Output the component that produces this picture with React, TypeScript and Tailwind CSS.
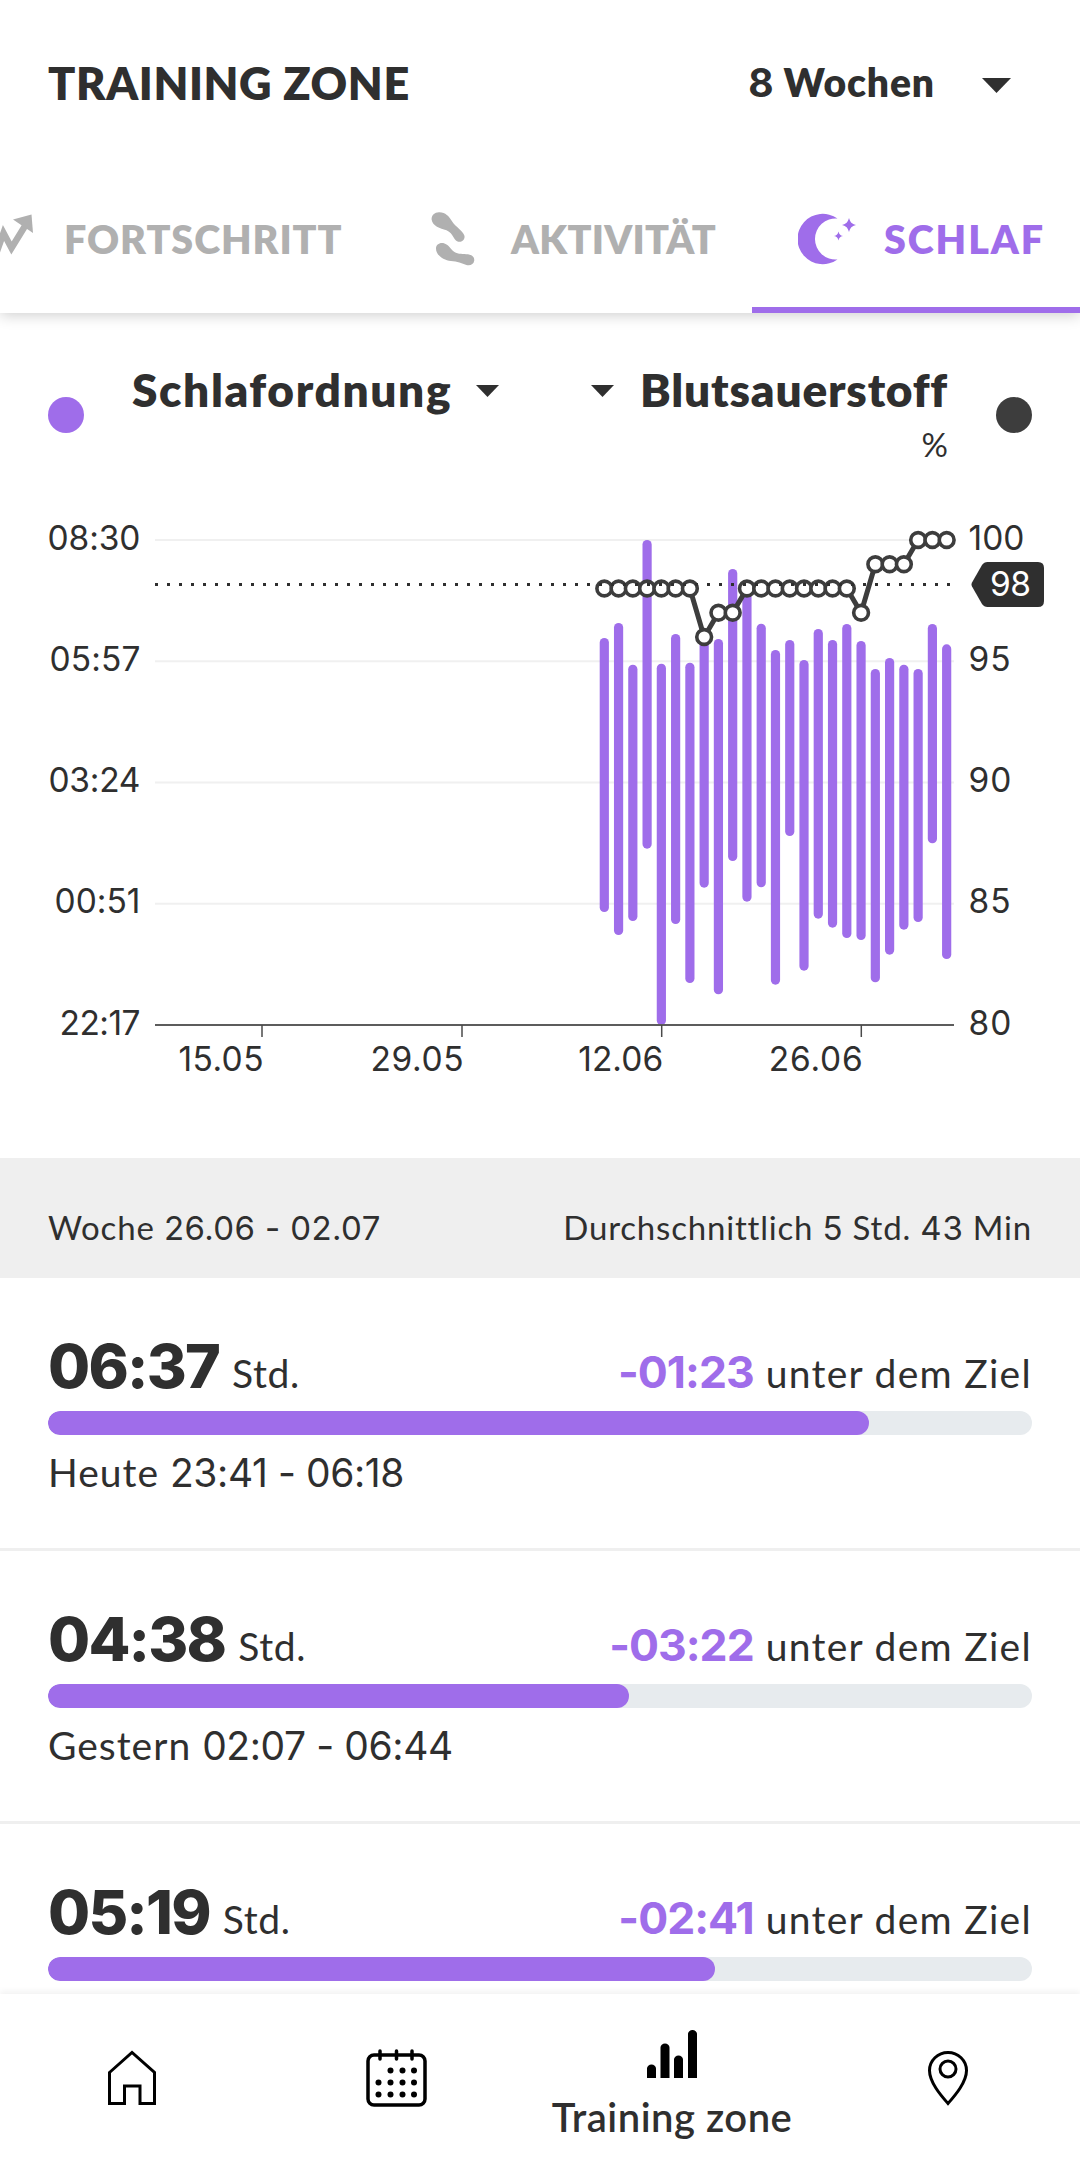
import React from 'react';

const PURPLE = '#9f6dea';
const DARK = '#2f2f2f';

const timeAxis = [
  { label: '08:30', width: 93 },
  { label: '05:57', width: 91 },
  { label: '03:24', width: 92 },
  { label: '00:51', width: 86 },
  { label: '22:17', width: 81 },
];

const oxygenAxis = [
  { label: '100', width: 56 },
  { label: '95', width: 42 },
  { label: '90', width: 43 },
  { label: '85', width: 42 },
  { label: '80', width: 43 },
];

const dates = [
  { label: '15.05', x: 262, width: 85 },
  { label: '29.05', x: 462, width: 93 },
  { label: '12.06', x: 661.7, width: 85 },
  { label: '26.06', x: 861.3, width: 94 },
];

// wake up / fall asleep position of every night, in chart units
const nights = [
  [172, 446], [157, 469], [198.7, 455], [74, 382.7], [197.7, 559],
  [168, 458], [196.7, 517], [170, 421.7], [173, 528.3], [103, 395],
  [122, 435.7], [157.7, 421.3], [184, 518.7], [174, 370], [194, 504.7],
  [163, 452.7], [174, 461.7], [158, 472], [175, 474], [203, 516.3],
  [192, 488.7], [198.7, 463.7], [203, 456], [158, 377.3], [178.3, 493],
];

const oxygen = [
  98, 98, 98, 98, 98, 98, 98, 96, 97, 97, 98, 98, 98,
  98, 98, 98, 98, 98, 97, 99, 99, 99, 100, 100, 100,
];

const entries = [
  { time: '06:37', diff: '-01:23', day: 'Heute', range: '23:41 - 06:18', percent: 83.4 },
  { time: '04:38', diff: '-03:22', day: 'Gestern', range: '02:07 - 06:44', percent: 59 },
  { time: '05:19', diff: '-02:41', percent: 67.8 },
];

const TOP = 74;
const STEP = 121.25;
const nightX = (i: number) => 604.3 + i * 14.265;
const oxygenY = (v: number) => TOP + ((100 - v) * STEP) / 5;

function Caret({ className }: { className: string }) {
  return (
    <svg className={className} viewBox="0 0 30 15" preserveAspectRatio="none" fill={DARK}>
      <path d="M0 0h30L15 15z" />
    </svg>
  );
}

function ProgressIcon() {
  return (
    <svg className="h-[60px] w-[60px] shrink-0" viewBox="0 0 60 60">
      <path d="M16 62 L29.500 24 L37.500 39 L51 17" fill="none" stroke="#b0b0b0" strokeWidth="6.500" strokeMiterlimit="8" />
      <path d="M39 10.500 L57.500 5.500 L59 24z" fill="#b0b0b0" />
    </svg>
  );
}

function StepsIcon() {
  return (
    <svg className="h-[54px] w-[44px] shrink-0" viewBox="0 0 44 54" fill="#b0b0b0">
      <path d="M.6 7.500C.4 3 4 0 8.500 .3c6 .3 9.500 4 12 8.200 2 3.500 5 5.800 8.500 9.200 3.500 3.300 6 6.500 3.800 9.800-2.200 3.200-6.500 3-8.800 0-2.300-3.400-3.500-7-8.500-9.200C9 16.500 1.500 14 .6 7.500z" />
      <path d="M5 36.500c0-4 4-6.500 8.500-5 4.500 1.400 6 5.800 10 8.500 3.500 2.500 9 1.700 13.500 2.300 4.500.7 6.700 3.200 6.200 6.500-.5 3.500-4 5.300-7.800 4.200-4.500-1.600-9-3.500-15.500-4C12.500 48 5 43.500 5 36.500z" />
    </svg>
  );
}

function MoonIcon() {
  return (
    <svg className="h-[52px] w-[58px] shrink-0" viewBox="0 0 58 52" fill={PURPLE}>
      <path d="M39.500 5.600A25.200 25.200 0 1 0 39.500 46.400A20.500 20.500 0 1 1 39.500 5.600z" />
      <path d="M51 5c1.400 4.500 2.500 5.600 7 7-4.500 1.400-5.600 2.500-7 7-1.400-4.500-2.500-5.600-7-7 4.500-1.400 5.600-2.500 7-7z" />
      <path d="M40.500 18.500c.9 3.100 1.500 3.700 4.500 4.500-3 .8-3.600 1.400-4.500 4.500-.9-3.100-1.500-3.700-4.500-4.500 3-.8 3.600-1.400 4.500-4.500z" />
    </svg>
  );
}

function Header() {
  return (
    <header className="relative z-10 flex h-[164px] shrink-0 items-center justify-between bg-white pl-[48px] pr-[69px]">
      <h1 className="mt-[3px] text-[45px] font-extrabold tracking-[0.6px]">TRAINING ZONE</h1>
      <button className="flex items-center gap-[47px]">
        <span className="mt-[2px] text-[39px] font-extrabold tracking-[0.9px]">
          <span className="font-['Inter'] font-bold tracking-normal">8</span> Wochen
        </span>
        <Caret className="mt-[6px] h-[15px] w-[29px]" />
      </button>
    </header>
  );
}

function Tabs() {
  return (
    <nav className="relative flex h-[149px] shrink-0 bg-white text-[39.5px] font-extrabold whitespace-nowrap text-[#b0b0b0] shadow-[0_2px_14px_rgba(0,0,0,0.2)]">
      <div className="ml-[-26px] flex w-[412px] shrink-0 items-center gap-[30px]">
        <ProgressIcon />
        <span className="tracking-[0.9px]">FORTSCHRITT</span>
      </div>
      <div className="flex w-[366px] shrink-0 items-center gap-[36px] pl-[45px]">
        <StepsIcon />
        <span className="tracking-[0.2px]">AKTIVITÄT</span>
      </div>
      <div className="flex flex-1 items-center gap-[28px] border-b-[6px] border-[#9f6dea] pt-[6px] pl-[46px] text-[#9f6dea]">
        <MoonIcon />
        <span className="tracking-[1.9px]">SCHLAF</span>
      </div>
    </nav>
  );
}

function Legend() {
  return (
    <div className="flex h-[102px] items-center px-[48px]">
      <span className="h-[36px] w-[36px] rounded-full bg-[#9f6dea]" />
      <div className="flex h-[102px] flex-1 justify-between pr-[48px] pl-[48px] text-[46px] leading-[50px] font-extrabold">
        <div className="flex h-[48px] items-center gap-[24px]">
          <span className="mt-[3px] tracking-[1.6px]">Schlafordnung</span>
          <Caret className="mt-[6px] h-[12px] w-[23px]" />
        </div>
        <div className="flex flex-col items-end">
          <div className="flex h-[48px] items-center gap-[26px]">
            <Caret className="mt-[6px] h-[12px] w-[23px]" />
            <span className="mt-[3px] tracking-[0.8px]">Blutsauerstoff</span>
          </div>
          <span className="mt-[10px] text-[33px] leading-[44px] font-normal">%</span>
        </div>
      </div>
      <span className="h-[36px] w-[36px] rounded-full bg-[#3d3d3d]" />
    </div>
  );
}

function Chart() {
  const points = oxygen.map((v, i) => `${nightX(i)},${oxygenY(v)}`).join(' ');

  return (
    <svg className="block h-[692px] w-full" viewBox="0 0 1080 692" fontSize="33.500" fill={DARK} fontFamily="Inter, sans-serif">
      {timeAxis.map((t, i) => (
        <g key={t.label}>
          {i < 4 && <line x1="155" x2="954" y1={TOP + i * STEP} y2={TOP + i * STEP} stroke="#f0f0f0" strokeWidth="2" />}
          <text x={140.500 - t.width} y={TOP + 9.500 + i * STEP} textLength={t.width}>{t.label}</text>
        </g>
      ))}
      {oxygenAxis.map((o, i) => (
        <text key={o.label} x="968.500" y={TOP + 9.500 + i * STEP} textLength={o.width}>{o.label}</text>
      ))}
      {nights.map(([from, to], i) => (
        <rect key={i} x={nightX(i) - 4.600} y={from} width="9.200" height={to - from} rx="4.600" fill={PURPLE} />
      ))}
      <line x1="155" x2="954" y1="559" y2="559" stroke="#5c5c5c" strokeWidth="2" />
      {dates.map((d) => (
        <g key={d.label}>
          <line x1={d.x} x2={d.x} y1="559" y2="571" stroke="#4a4a4a" strokeWidth="1.500" />
          <text x={d.x + 1.500 - d.width} y="604.500" textLength={d.width}>{d.label}</text>
        </g>
      ))}

      <polyline points={points} fill="none" stroke="#3d3d3d" strokeWidth="5" />
      {oxygen.map((v, i) => (
        <circle key={i} cx={nightX(i)} cy={oxygenY(v)} r="7.400" fill="#fff" stroke="#3d3d3d" strokeWidth="3.600" />
      ))}
      {/* average */}
      <line x1="155" x2="954" y1="118.500" y2="118.500" stroke={DARK} strokeWidth="3" strokeDasharray="3 9" />
      <path d="M972 116.500 L982 99 Q984 96 987.500 96 H1038 Q1044 96 1044 102 V135 Q1044 141 1038 141 H987.500 Q984 141 982 138 L972 120.500 Q971 118.500 972 116.500z" />
      <text x="990" y="130" textLength="41" fill="#fff">98</text>
    </svg>
  );
}

function Entry({ time, diff, day, range, percent }: (typeof entries)[number]) {
  return (
    <div className="h-[273px] shrink-0 border-b-[3px] border-[#efefef] px-[48px] pt-[52px]">
      <div className="flex h-[72px] items-baseline justify-between text-[39px] leading-[72px] whitespace-nowrap">
        <div>
          <span className="font-['Inter'] text-[61px] font-extrabold tracking-[-1.8px]">{time}</span>
          <span className="ml-[13px] tracking-[0.6px]">Std.</span>
        </div>
        <div>
          <span className="font-['Inter'] text-[44.5px] font-bold tracking-[-1px] text-[#9f6dea]">{diff}</span>
          <span className="ml-[12px] tracking-[1.3px]">unter dem Ziel</span>
        </div>
      </div>
      <div className="mt-[9px] h-[24px] overflow-hidden rounded-full bg-[#e7ebee]">
        <div className="h-full rounded-full bg-[#9f6dea]" style={{ width: `${percent}%` }} />
      </div>
      {range && (
        <p className="mt-[13px] text-[39px] leading-[48px] tracking-[1px]">
          {day} <span className="font-['Inter'] tracking-[-0.400px]">{range}</span>
        </p>
      )}
    </div>
  );
}

function BottomNav() {
  return (
    <footer className="relative flex h-[168px] shrink-0 bg-white shadow-[0_-3px_6px_rgba(0,0,0,0.05)]">
      <div className="flex w-[264px] justify-center pt-[56px]">
        <svg className="h-[56px] w-[50px]" viewBox="0 0 50 56" fill="none" stroke="#000" strokeWidth="3">
          <path d="M2.500 22.500 L25 2.500 L47.500 22.500 V53.500 H33 V36 H17.500 V53.500 H2.500z" />
        </svg>
      </div>
      <div className="flex w-[265px] justify-center pt-[54px]">
        <svg className="h-[60px] w-[62px]" viewBox="0 0 62 60" fill="none" stroke="#000">
          <rect x="2" y="7" width="57" height="50" rx="6" strokeWidth="3.500" />
          <path d="M14 3v8M30.500 3v8M46 3v8" strokeWidth="3.500" strokeLinecap="round" />
          <g fill="#000" stroke="none">
            {[22.500, 34.500, 46.500].map((y) =>
              [12.500, 24.500, 36.500, 48].map((x) =>
                x === 12.500 && y === 22.500 ? null : <circle key={`${x}-${y}`} cx={x} cy={y} r="3" />
              )
            )}
          </g>
        </svg>
      </div>
      <div className="flex w-[286px] flex-col items-center pt-[36px]">
        <svg className="h-[48px] w-[50px]" viewBox="0 0 50 48">
          <path d="M0 48V38.500a4.500 4 0 0 1 9 0V48zM13.500 48V17.500a4.500 4 0 0 1 9 0V48zM27 48V29.500a4.500 4 0 0 1 9 0V48zM41 48V4a4.500 4 0 0 1 9 0V48z" />
        </svg>
        <span className="mt-[15px] text-[40px] leading-[48px] font-semibold tracking-[0.5px] whitespace-nowrap">Training zone</span>
      </div>
      <div className="flex flex-1 justify-center pt-[56px]">
        <svg className="h-[56px] w-[42px]" viewBox="0 0 42 56" fill="none" stroke="#000" strokeWidth="3">
          <path d="M21 53.500C14.500 46 2.500 32.500 2.500 20.500a18.500 18 0 0 1 37 0C39.500 32.500 27.500 46 21 53.500z" />
          <circle cx="21" cy="19" r="8" />
        </svg>
      </div>
    </footer>
  );
}

function App() {
  return (
    <div className="flex h-[2162px] w-[1080px] flex-col overflow-hidden bg-white font-['Lato',sans-serif] text-[#2f2f2f] [font-variant-ligatures:none]">
      <Header />
      <Tabs />
      <main className="min-h-0 flex-1 overflow-hidden">
        <section className="pt-[51px]">
          <Legend />
          <Chart />
        </section>
        <div className="flex h-[120px] items-center justify-between bg-[#efefef] px-[48px] pt-[20px] text-[33px] tracking-[0.8px]">
          <span>
            Woche <span className="font-['Inter'] tracking-[0.400px]">26.06 - 02.07</span>
          </span>
          <span>
            Durchschnittlich <span className="font-['Inter']">5</span> Std. <span className="font-['Inter']">43</span> Min
          </span>
        </div>
        {entries.map((entry) => (
          <Entry key={entry.time} {...entry} />
        ))}
      </main>
      <BottomNav />
    </div>
  );
}

export default App;
